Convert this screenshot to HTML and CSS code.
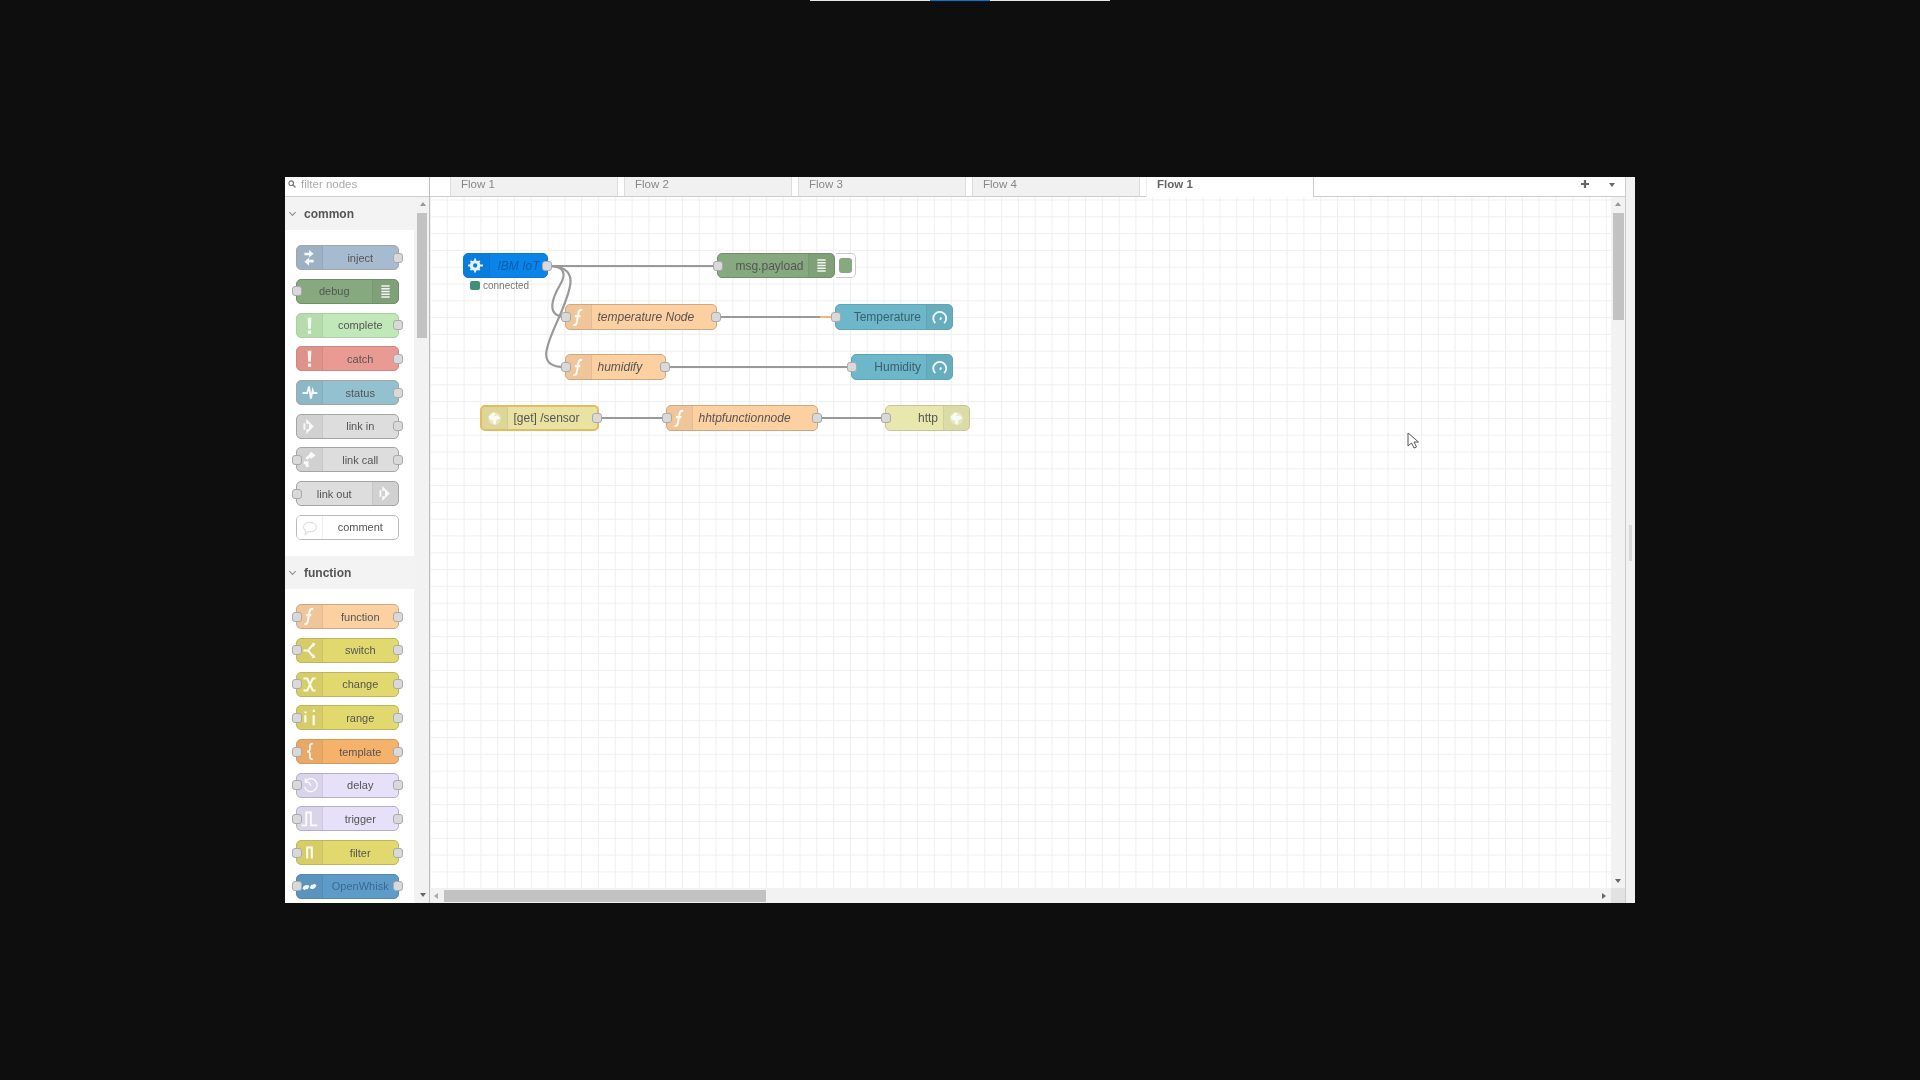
FILE: index.html
```html
<!DOCTYPE html>
<html lang="en">
<head>
<meta charset="utf-8">
<title>Node-RED flow editor</title>
<link rel="stylesheet" href="styles.css">
</head>
<body>
<svg class="defs" xmlns="http://www.w3.org/2000/svg">
  <symbol id="i-inject" viewBox="0 0 27 25"><path d="M8 7.500h5V4.500l5 4-5 4V10H8zM18 15h-5v-2.500l-5 4.500 5 4.500V18h5z" fill="#fff" stroke="none"/></symbol>
  <symbol id="i-list" viewBox="0 0 27 25"><path d="M9 6.500h9M9 9.500h9M9 12.500h9M9 15.500h9M9 18.500h9" stroke="#fff" stroke-width="1.600" fill="none"/></symbol>
  <symbol id="i-bang" viewBox="0 0 27 25"><path d="M11.500 4h4l-.6 12h-2.800zM11.800 18h3.400v3.500h-3.400z" fill="#fff" stroke="none"/></symbol>
  <symbol id="i-status" viewBox="0 0 27 25"><path d="M6 13h5l2-7 2 13 2-9 1 3h4" stroke="#fff" stroke-width="2" fill="none"/></symbol>
  <symbol id="i-link" viewBox="0 0 27 25"><path d="M10 4.500l8 8-8 8v-5h3v-6h-3z" fill="#fff" stroke="none"/><path d="M8 9v7" stroke="#fff" stroke-width="2"/></symbol>
  <symbol id="i-call" viewBox="0 0 27 25"><path d="M15 4l5 4-5 4-1-2-3 3-2-2 4-4zM8 14l5 1-1 2 1 3-3 1-1-3-2-1z" fill="#fff" stroke="none"/></symbol>
  <symbol id="i-comment" viewBox="0 0 27 25"><path d="M7 12c0-3 3-5 7-5s7 2 7 5-3 5-7 5h-2l-3 3v-4c-1-1-2-2-2-4z" stroke="#ddd" stroke-width="1.300" fill="none"/></symbol>
  <symbol id="i-func" viewBox="0 0 27 25"><path d="M17.500 4.500c-3-1-3.800 1-4.200 4l-1.500 8.500c-.5 3-1 4-3.800 3.500M9.500 11h6" stroke="#fff" stroke-width="2.200" fill="none"/></symbol>
  <symbol id="i-switch" viewBox="0 0 27 25"><path d="M7 12.500h5l5-6M12 12.500l5 6" stroke="#fff" stroke-width="2.200" fill="none"/><path d="M16 4l4 1-2 4zM16 21l4-1-2-4z" fill="#fff" stroke="none"/></symbol>
  <symbol id="i-change" viewBox="0 0 27 25"><path d="M7 6h4l6 13h3M7 19h4l6-13h3" stroke="#fff" stroke-width="2.200" fill="none"/></symbol>
  <symbol id="i-range" viewBox="0 0 27 25"><path d="M9 10v8M18 10v11" stroke="#fff" stroke-width="2.400" fill="none"/><path d="M8 6h2.400v2H8zM17 4h2.400v2.500H17z" fill="#fff" stroke="none"/></symbol>
  <symbol id="i-brace" viewBox="0 0 27 25"><path d="M17 4c-4 0-3 3-3 5s0 3-3 3.500c3 .5 3 1.500 3 3.500s-1 5 3 5" stroke="#fff" stroke-width="2" fill="none"/></symbol>
  <symbol id="i-delay" viewBox="0 0 27 25"><path d="M9 8a7 7 0 1 1-1 6M9 5v4h4M13 9l2 4" stroke="#fff" stroke-width="1.400" fill="none"/></symbol>
  <symbol id="i-trigger" viewBox="0 0 27 25"><path d="M5 20h5V6h5v14h7" stroke="#fff" stroke-width="2" fill="none"/></symbol>
  <symbol id="i-filter" viewBox="0 0 27 25"><path d="M11 19V7h5v12" stroke="#fff" stroke-width="2.200" fill="none"/></symbol>
  <symbol id="i-whisk" viewBox="0 0 27 25"><path d="M6 15a4.500 4.500 0 0 1 7.500-3l-2 3.500a2.500 2.500 0 0 0-3 1zM21 11a4.500 4.500 0 0 1-7.500 3l2-3.500a2.500 2.500 0 0 0 3-1z" fill="#fff" stroke="none"/></symbol>
  <symbol id="i-gear" viewBox="0 0 27 25"><circle cx="12" cy="12.500" r="4" stroke="#fff" stroke-width="3.400" fill="none"/><path d="M12 5v3M12 17v3M4.500 12.500h3M16.500 12.500h4M7 7.500l2 2M15 15.500l2 2M7 17.500l2-2M15 9.500l2-2" stroke="#fff" stroke-width="2"/></symbol>
  <symbol id="i-gauge" viewBox="0 0 27 25"><path d="M9 18.500a7 7 0 1 1 9.500 0M14 15l1.500-2.500" stroke="#fff" stroke-width="2" fill="none"/></symbol>
  <symbol id="i-web" viewBox="0 0 27 25"><circle cx="13.500" cy="12.500" r="7" fill="#fff" fill-opacity=".35"/><path d="M7 11l5-5 3 1.500L13 10l4-1 3 3-4.500 2.500-1 5-3-2.500 1-3-2.500 1z" fill="#fff" stroke="none"/></symbol>
</svg>

<div class="top-strip"><span class="strip-light"></span><span class="strip-blue"></span><span class="strip-light"></span></div>

<main class="window">
  <aside class="palette">
    <div class="filter">
      <svg class="search" viewBox="0 0 8 8"><circle cx="3.200" cy="3.200" r="2.300" fill="none" stroke="#777" stroke-width="1.200"/><path d="M5 5l2.500 2.500" stroke="#777" stroke-width="1.300"/></svg>
      <span>filter nodes</span>
    </div>
    <div class="palette-body">
      <div class="palette-list">
        <section>
          <h2 class="sec-head"><span class="chev"></span>common</h2>
          <div class="sec-body">
            <div class="node c-inject"><span class="ic"><svg><use href="#i-inject"/></svg></span><span class="lbl">inject</span><i class="port pr"></i></div>
            <div class="node flip c-debug"><span class="ic"><svg><use href="#i-list"/></svg></span><span class="lbl">debug</span><i class="port pl"></i></div>
            <div class="node c-complete"><span class="ic"><svg><use href="#i-bang"/></svg></span><span class="lbl">complete</span><i class="port pr"></i></div>
            <div class="node c-catch"><span class="ic"><svg><use href="#i-bang"/></svg></span><span class="lbl">catch</span><i class="port pr"></i></div>
            <div class="node c-status"><span class="ic"><svg><use href="#i-status"/></svg></span><span class="lbl">status</span><i class="port pr"></i></div>
            <div class="node c-link"><span class="ic"><svg><use href="#i-link"/></svg></span><span class="lbl">link in</span><i class="port pr"></i></div>
            <div class="node c-link"><span class="ic"><svg><use href="#i-call"/></svg></span><span class="lbl">link call</span><i class="port pl"></i><i class="port pr"></i></div>
            <div class="node flip c-link"><span class="ic"><svg><use href="#i-link"/></svg></span><span class="lbl">link out</span><i class="port pl"></i></div>
            <div class="node c-comment"><span class="ic"><svg><use href="#i-comment"/></svg></span><span class="lbl">comment</span></div>
          </div>
        </section>
        <section>
          <h2 class="sec-head"><span class="chev"></span>function</h2>
          <div class="sec-body">
            <div class="node c-func"><span class="ic"><svg><use href="#i-func"/></svg></span><span class="lbl">function</span><i class="port pl"></i><i class="port pr"></i></div>
            <div class="node c-yellow"><span class="ic"><svg><use href="#i-switch"/></svg></span><span class="lbl">switch</span><i class="port pl"></i><i class="port pr"></i></div>
            <div class="node c-yellow"><span class="ic"><svg><use href="#i-change"/></svg></span><span class="lbl">change</span><i class="port pl"></i><i class="port pr"></i></div>
            <div class="node c-yellow"><span class="ic"><svg><use href="#i-range"/></svg></span><span class="lbl">range</span><i class="port pl"></i><i class="port pr"></i></div>
            <div class="node c-template"><span class="ic"><svg><use href="#i-brace"/></svg></span><span class="lbl">template</span><i class="port pl"></i><i class="port pr"></i></div>
            <div class="node c-lilac"><span class="ic"><svg><use href="#i-delay"/></svg></span><span class="lbl">delay</span><i class="port pl"></i><i class="port pr"></i></div>
            <div class="node c-lilac"><span class="ic"><svg><use href="#i-trigger"/></svg></span><span class="lbl">trigger</span><i class="port pl"></i><i class="port pr"></i></div>
            <div class="node c-yellow"><span class="ic"><svg><use href="#i-filter"/></svg></span><span class="lbl">filter</span><i class="port pl"></i><i class="port pr"></i></div>
            <div class="node c-whisk"><span class="ic"><svg><use href="#i-whisk"/></svg></span><span class="lbl">OpenWhisk</span><i class="port pl"></i><i class="port pr"></i></div>
          </div>
        </section>
      </div>
      <div class="scroll-v pal-scroll"><i class="arrow up"></i><span class="thumb"></span><i class="arrow down"></i></div>
    </div>
  </aside>

  <div class="workspace">
    <nav class="tabs">
      <span class="tab">Flow 1</span>
      <span class="tab">Flow 2</span>
      <span class="tab">Flow 3</span>
      <span class="tab">Flow 4</span>
      <span class="tab active">Flow 1</span>
      <span class="tab-tools"><svg class="plus" viewBox="0 0 10 10"><path d="M5 1v8M1 5h8" stroke="#666" stroke-width="2.200"/></svg><i class="arrow down"></i></span>
    </nav>
    <div class="stage">
      <div class="canvas">
        <svg class="wires" viewBox="0 0 1181 691" xmlns="http://www.w3.org/2000/svg">
          <g fill="none" stroke="#999" stroke-width="2.200">
            <path d="M118 69H287"/>
            <path d="M118 69C136 69 136 78 130 88 124 98 114 119 135 120"/>
            <path d="M118 69C150 69 142 90 130 118 118 146 104 170 135 170"/>
            <path d="M287 120H392"/>
            <path d="M236 170H421"/>
            <path d="M169 221H236"/>
            <path d="M388 221H455"/>
          </g>
          <path d="M390 120H405" fill="none" stroke="#f2b676" stroke-width="2"/>
        </svg>
        <div class="node fn c-ibm n-ibm"><span class="ic"><svg><use href="#i-gear"/></svg></span><span class="lbl it blue-t">IBM IoT</span><i class="port pr"></i></div>
        <div class="status-line"><span class="dot"></span>connected</div>
        <div class="node fn flip c-debug n-msg"><span class="ic"><svg><use href="#i-list"/></svg></span><span class="lbl">msg.payload</span><i class="port pl"></i></div>
        <div class="dbg-btn"><span></span></div>
        <div class="node fn c-func n-temp"><span class="ic"><svg><use href="#i-func"/></svg></span><span class="lbl it start">temperature Node</span><i class="port pl"></i><i class="port pr"></i></div>
        <div class="node fn flip c-gauge n-tempg"><span class="ic"><svg><use href="#i-gauge"/></svg></span><span class="lbl">Temperature</span><i class="port pl"></i></div>
        <div class="node fn c-func n-hum"><span class="ic"><svg><use href="#i-func"/></svg></span><span class="lbl it start">humidify</span><i class="port pl"></i><i class="port pr"></i></div>
        <div class="node fn flip c-gauge n-humg"><span class="ic"><svg><use href="#i-gauge"/></svg></span><span class="lbl">Humidity</span><i class="port pl"></i></div>
        <div class="node fn c-get n-get"><span class="ic"><svg><use href="#i-web"/></svg></span><span class="lbl start">[get] /sensor</span><i class="port pr"></i></div>
        <div class="node fn c-func n-http"><span class="ic"><svg><use href="#i-func"/></svg></span><span class="lbl it start">hhtpfunctionnode</span><i class="port pl"></i><i class="port pr"></i></div>
        <div class="node fn flip c-resp n-resp"><span class="ic"><svg><use href="#i-web"/></svg></span><span class="lbl">http</span><i class="port pl"></i></div>
        <svg class="cursor" viewBox="0 0 12 17"><path d="M1 1v13l3.500-3 2.500 5 2.500-1-2.500-5h4.500z" fill="#fff" stroke="#555" stroke-width="1"/></svg>
      </div>
      <div class="scroll-v can-scroll"><i class="arrow up"></i><span class="thumb"></span><i class="arrow down"></i></div>
      <div class="scroll-h"><i class="arrow left"></i><span class="thumb"></span><i class="arrow right"></i></div>
      <div class="corner"></div>
    </div>
  </div>

  <div class="side-strip"><span class="side-thumb"></span></div>
</main>
</body>
</html>
```
FILE: styles.css
```css
* { box-sizing: border-box; }
html, body { height: 100%; }
body {
  margin: 0;
  background: #0e0e0e;
  font-family: "Liberation Sans", Arial, sans-serif;
  color: #555;
  overflow: hidden;
}
.defs { display: none; }

.top-strip { display: flex; justify-content: center; height: 1px; }
.strip-light { width: 120px; background: #e6e6e6; }
.strip-blue { width: 60px; background: #0673d6; }

.window {
  display: grid;
  grid-template-columns: 145px 1196px 9px;
  width: 1350px;
  height: 726px;
  margin: 176px auto 0;
  background: #fff;
  overflow: hidden;
  filter: blur(.65px);
}

/* palette */
.palette {
  display: flex;
  flex-direction: column;
  border-right: 1px solid #bdbdbd;
  min-height: 0;
}
.filter {
  display: flex;
  align-items: center;
  gap: 5px;
  height: 20px;
  flex: none;
  padding: 0 0 5px 3px;
  font-size: 11.500px;
  color: #aaa;
  border-bottom: 1px solid #ccc;
}
.search { width: 8px; height: 8px; }
.palette-body { display: flex; flex: 1; min-height: 0; }
.palette-list { width: 131px; flex: none; overflow: hidden; background: #f3f3f3; }
.sec-head {
  display: flex;
  align-items: center;
  height: 33px;
  margin: 0;
  padding: 1px 0 0 19px;
  position: relative;
  font-size: 12px;
  font-weight: 700;
  color: #555;
}
.chev {
  position: absolute;
  left: 5px;
  top: 13px;
  width: 5px;
  height: 5px;
  border-right: 1px solid #888;
  border-bottom: 1px solid #888;
  transform: rotate(45deg);
}
.sec-body {
  display: flex;
  flex-direction: column;
  gap: 8.700px;
  width: 129px;
  height: 326px;
  padding: 15.300px 0 0 11px;
  background: #fff;
}

/* nodes */
.node {
  position: relative;
  display: flex;
  align-items: center;
  width: 102.500px;
  height: 25px;
  flex: none;
  border: 1px solid #a5a5a5;
  border-radius: 5px;
  font-size: 11px;
  color: #555;
}
.node.flip { flex-direction: row-reverse; }
.ic {
  display: flex;
  align-items: center;
  justify-content: center;
  width: 26px;
  height: 100%;
  flex: none;
  background: rgba(0, 0, 0, .05);
  border-right: 1px solid rgba(0, 0, 0, .05);
  border-radius: 4px 0 0 4px;
}
.ic svg { width: 26px; height: 25px; opacity: .9; }
.flip .ic { border-right: 0; border-left: 1px solid rgba(0, 0, 0, .05); border-radius: 0 4px 4px 0; }
.lbl { flex: 1; text-align: center; white-space: nowrap; }
.lbl.start { text-align: left; padding-left: 5.500px; }
.lbl.it { font-style: italic; }
.fn.flip .lbl { text-align: right; padding-right: 5px; }
.fn.n-msg .lbl { padding-right: 4.500px; }
.blue-t { color: #0a5fb0; }
.port {
  position: absolute;
  top: 50%;
  width: 10px;
  height: 10px;
  margin-top: -5px;
  background: #d9d9d9;
  border: 1px solid #aaa;
  border-radius: 3px;
}
.pr { right: -5px; }
.pl { left: -5px; }

.c-inject { background: #a6bbcf; }
.c-debug { background: #87a980; border-color: #6f8f69; }
.c-complete { background: #c0e8b8; border-color: #a9cfa2; }
.c-catch { background: #e99a92; border-color: #cf8780; }
.c-status { background: #94c1d0; }
.c-link { background: #ddd; }
.c-comment { background: #fff; border-color: #bbb; }
.c-comment .ic { background: #fff; border-right-color: #eee; }
.c-func { background: #fdd0a2; border-color: #cfa882; }
.c-yellow { background: #e2d96e; border-color: #bdb65e; }
.c-template { background: #f6b26b; border-color: #d39a5e; }
.c-lilac { background: #e6e0f8; border-color: #b5b0c8; }
.c-whisk { background: #5f9bc9; border-color: #538ab5; color: #3a6a92; }
.c-ibm { background: #0a84e8; border-color: #0a7ad8; }
.c-gauge { background: #6cb7c9; border-color: #5fa5b6; color: #3f5f68; }
.c-get { background: #e9e2a2; border: 2px solid #e5bb5e; }
.c-resp { background: #e7e7ae; border-color: #c6c695; }

/* scrollbars */
.scroll-v {
  position: relative;
  display: flex;
  flex-direction: column;
  align-items: center;
  background: #f2f2f2;
}
.pal-scroll { width: 13px; }
.pal-scroll .thumb { position: absolute; top: 16px; left: 1px; width: 10px; height: 125px; background: #c2c2c2; }
.arrow { position: absolute; width: 0; height: 0; border: 3px solid transparent; }
.arrow.up { top: 5px; border-top: 0; border-bottom: 4px solid #999; }
.arrow.down { bottom: 6px; border-bottom: 0; border-top: 4px solid #666; }

/* workspace */
.workspace { display: flex; flex-direction: column; min-width: 0; border-right: 1px solid #ccc; }
.tabs {
  display: flex;
  align-items: stretch;
  gap: 6px;
  height: 20px;
  flex: none;
  padding-left: 20px;
  border-bottom: 1px solid #ccc;
  font-size: 11.500px;
  color: #888;
}
.tab {
  width: 168px;
  padding: 0 0 2px 10px;
  line-height: 15px;
  background: #f1f1f1;
  border-left: 1px solid #ddd;
  border-right: 1px solid #ddd;
}
.tab.active {
  height: 20px;
  font-weight: 700;
  color: #666;
  background: #fff;
  border-left: 1px solid #eee;
  border-right: 1px solid #ccc;
}
.tab-tools { position: relative; flex: 1; }
.plus { position: absolute; left: 260px; top: 2px; width: 10px; height: 10px; }
.tab-tools .arrow.down { right: 10px; top: 6px; bottom: auto; }

.stage {
  display: grid;
  grid-template-columns: 1181px 14px;
  grid-template-rows: 691px 15px;
  flex: 1;
  min-height: 0;
}
.canvas {
  position: relative;
  overflow: hidden;
  background-color: #fff;
  background-image:
    linear-gradient(to right, #efefef 1px, transparent 1px),
    linear-gradient(to bottom, #efefef 1px, transparent 1px);
  background-size: 16.800px 16.800px;
  background-position: 0 2.500px;
}
.wires { position: absolute; left: 0; top: 0; width: 1181px; height: 691px; }
.fn { position: absolute; height: 26px; font-size: 12px; }
.fn .ic { width: 26px; }
.n-ibm { left: 33px; top: 56px; width: 85px; height: 25px; }
.n-msg { left: 287px; top: 56px; width: 118px; height: 25px; }
.n-temp { left: 135px; top: 107px; width: 152px; }
.n-tempg { left: 405px; top: 107px; width: 118px; }
.n-hum { left: 135px; top: 157px; width: 101px; }
.n-humg { left: 421px; top: 157px; width: 102px; }
.n-get { left: 50px; top: 208px; width: 119px; }
.n-http { left: 236px; top: 208px; width: 152px; }
.n-resp { left: 455px; top: 208px; width: 85px; }
.status-line {
  position: absolute;
  left: 40px;
  top: 81px;
  display: flex;
  align-items: center;
  gap: 3px;
  height: 15px;
  font-size: 10px;
  color: #777;
}
.dot { width: 10px; height: 9px; border-radius: 2px; background: #3f8f7c; }
.dbg-btn {
  position: absolute;
  left: 406px;
  top: 56px;
  width: 20px;
  height: 25px;
  padding: 4px 3px;
  background: #fff;
  border: 1px solid #ccc;
  border-left: 0;
  border-radius: 0 5px 5px 0;
}
.dbg-btn span { display: block; height: 100%; background: #87a980; border-radius: 3px; }
.cursor { position: absolute; left: 977px; top: 235px; width: 12px; height: 17px; }

.can-scroll .thumb { position: absolute; top: 16px; left: 2px; width: 11px; height: 107px; background: #c2c2c2; }
.can-scroll .arrow.down { bottom: 5px; }
.scroll-h { position: relative; background: #f2f2f2; }
.scroll-h .thumb { position: absolute; left: 14px; top: 2px; width: 322px; height: 12px; background: #c2c2c2; }
.arrow.left { left: 4px; top: 5px; border-left: 0; border-right: 4px solid #aaa; }
.arrow.right { right: 5px; top: 5px; border-right: 0; border-left: 4px solid #666; }
.corner { background: #e2e2e2; }

.side-strip { position: relative; background: #f1f1f1; }
.side-thumb { position: absolute; left: 3px; top: 348px; width: 3px; height: 36px; background: #d8d8d8; }
```
